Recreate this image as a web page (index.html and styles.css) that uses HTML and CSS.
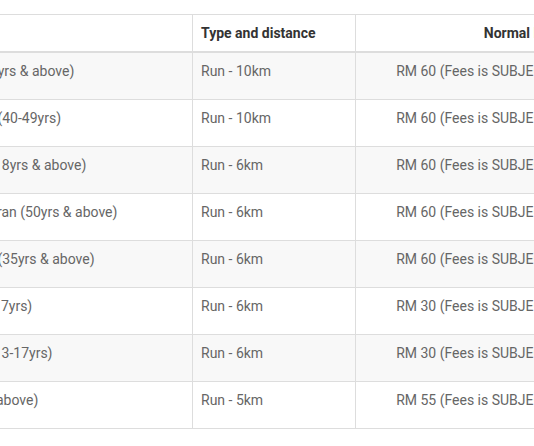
FILE: index.html
```html
<!DOCTYPE html>
<html lang="en">
<head>
<meta charset="utf-8">
<title>Race categories</title>
<link rel="stylesheet" href="styles.css">
</head>
<body>
<div class="scroller">
  <table class="fees">
    <thead>
      <tr>
        <th class="col-cat">Category</th>
        <th class="col-type">Type and distance</th>
        <th class="col-fee">Normal Fee</th>
      </tr>
    </thead>
    <tbody>
      <tr><td>Men Veteran (40yrs &amp; above)</td><td>Run - 10km</td><td class="fee">RM 60 (Fees is SUBJECTED TO 6% SST)</td></tr>
      <tr><td>Women Veteran (40-49yrs)</td><td>Run - 10km</td><td class="fee">RM 60 (Fees is SUBJECTED TO 6% SST)</td></tr>
      <tr><td>Women Senior (18yrs &amp; above)</td><td>Run - 6km</td><td class="fee">RM 60 (Fees is SUBJECTED TO 6% SST)</td></tr>
      <tr><td>Men Senior Veteran (50yrs &amp; above)</td><td>Run - 6km</td><td class="fee">RM 60 (Fees is SUBJECTED TO 6% SST)</td></tr>
      <tr><td>Women Veteran (35yrs &amp; above)</td><td>Run - 6km</td><td class="fee">RM 60 (Fees is SUBJECTED TO 6% SST)</td></tr>
      <tr><td>Men Junior (13-17yrs)</td><td>Run - 6km</td><td class="fee">RM 30 (Fees is SUBJECTED TO 6% SST)</td></tr>
      <tr><td>Women Junior (13-17yrs)</td><td>Run - 6km</td><td class="fee">RM 30 (Fees is SUBJECTED TO 6% SST)</td></tr>
      <tr><td>Fun Run (7yrs &amp; above)</td><td>Run - 5km</td><td class="fee">RM 55 (Fees is SUBJECTED TO 6% SST)</td></tr>
    </tbody>
  </table>
</div>
</body>
</html>
```
FILE: styles.css
```css
html, body {
  margin: 0;
  padding: 0;
  overflow: hidden;
  background: #ffffff;
}

body {
  font-family: Roboto, "Liberation Sans", Arial, sans-serif;
  font-size: 14px;
  color: #666666;
}

.scroller {
  padding-top: 14px;
  margin-left: -113px;
}

.fees {
  width: 798px;
  border-collapse: separate;
  border-spacing: 0;
  table-layout: fixed;
  border-top: 1px solid #dddddd;
}

.fees th,
.fees td {
  box-sizing: border-box;
  padding: 8px 8px 18px;
  line-height: 20px;
  text-align: left;
  vertical-align: top;
  border-right: 1px solid #dddddd;
  border-bottom: 1px solid #dddddd;
  white-space: nowrap;
  font-weight: 400;
}

.fees th {
  padding: 8px;
  font-weight: 700;
  color: #333333;
  border-bottom: 2px solid #dddddd;
}

.col-cat { width: 306px; }
.col-type { width: 163px; }
.col-fee { width: 329px; }

.fees th.col-fee,
.fees td.fee {
  text-align: center;
}

.fees tbody tr:nth-child(odd) td {
  background: #f8f8f8;
}
```
